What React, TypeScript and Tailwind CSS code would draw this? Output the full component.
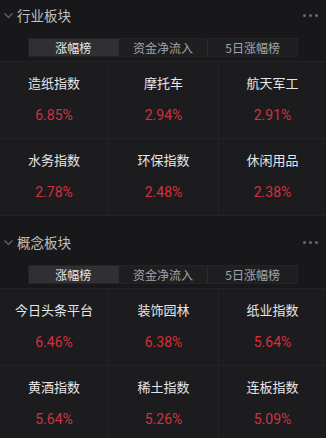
type Item = {
  name: string;
  change: string;
};

type Section = {
  title: string;
  rows: Item[][];
};

const tabs = ['涨幅榜', '资金净流入', '5日涨幅榜'];

const sections: Section[] = [
  {
    title: '行业板块',
    rows: [
      [
        { name: '造纸指数', change: '6.85%' },
        { name: '摩托车', change: '2.94%' },
        { name: '航天军工', change: '2.91%' },
      ],
      [
        { name: '水务指数', change: '2.78%' },
        { name: '环保指数', change: '2.48%' },
        { name: '休闲用品', change: '2.38%' },
      ],
    ],
  },
  {
    title: '概念板块',
    rows: [
      [
        { name: '今日头条平台', change: '6.46%' },
        { name: '装饰园林', change: '6.38%' },
        { name: '纸业指数', change: '5.64%' },
      ],
      [
        { name: '黄酒指数', change: '5.64%' },
        { name: '稀土指数', change: '5.26%' },
        { name: '连板指数', change: '5.09%' },
      ],
    ],
  },
];

function Block({ section }: { section: Section }) {
  return (
    <div>
      <div className="h-[30px] flex items-center justify-between pl-[3px] pr-[8px]">
        <div className="flex items-center">
          <svg width="11" height="11" viewBox="0 0 11 11" className="mr-[3px]">
            <path d="M1.5 3.5 L5.5 7.5 L9.5 3.5" fill="none" stroke="#6a6a6e" strokeWidth="1.1" />
          </svg>
          <span className="text-[13.5px] text-[#c0c0c2]">{section.title}</span>
        </div>
        <div className="flex gap-[3px] mt-[1px]">
          <span className="w-[3px] h-[3px] rounded-full bg-[#6a6a6e]" />
          <span className="w-[3px] h-[3px] rounded-full bg-[#6a6a6e]" />
          <span className="w-[3px] h-[3px] rounded-full bg-[#6a6a6e]" />
        </div>
      </div>

      <div className="mt-[8px] mx-[28px] h-[19px] flex bg-[#1f1f21] border border-[#242426]">
        {tabs.map((tab, i) => (
          <div
            key={tab}
            className={
              i === 0
                ? 'flex-1 flex items-center justify-center text-[12px] text-[#e8e8ea] bg-[#303032]'
                : 'flex-1 flex items-center justify-center text-[12px] text-[#a4a4a8] border-l border-[#2c2c2e]'
            }
          >
            {tab}
          </div>
        ))}
      </div>

      <div className="mt-[4px] border-t border-[#232325]">
        {section.rows.map((row, r) => (
          <div key={r} className="grid grid-cols-[108px_110px_1fr] h-[77px] border-b border-[#232325]">
            {row.map((item, c) => (
              <div
                key={item.name}
                className={
                  c === 0
                    ? 'flex flex-col items-center pt-[12px] bg-[#1c1c1e]'
                    : 'flex flex-col items-center pt-[12px] bg-[#1c1c1e] border-l border-[#232325]'
                }
              >
                <span className="text-[13px] leading-[18px] text-[#e6e6e8]">{item.name}</span>
                <span
                  className="mt-[14px] text-[14px] leading-[18px] text-[#d0323e]"
                  style={{ fontFamily: 'Roboto, "Noto Sans CJK SC", sans-serif' }}
                >
                  {item.change}
                </span>
              </div>
            ))}
          </div>
        ))}
      </div>
    </div>
  );
}

export default function App() {
  return (
    <div
      className="w-[326px] h-[438px] overflow-hidden bg-[#18181a] flex flex-col gap-[11px]"
      style={{ fontFamily: '"Noto Sans CJK SC", Roboto, sans-serif' }}
    >
      {sections.map((s) => (
        <Block key={s.title} section={s} />
      ))}
    </div>
  );
}
